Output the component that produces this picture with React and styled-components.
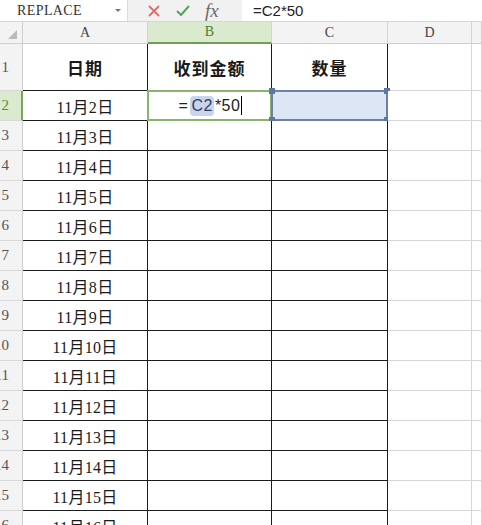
import React from "react";
import styled, { createGlobalStyle } from "styled-components";

const Global = createGlobalStyle`
  html, body { margin: 0; padding: 0; background: #fff; overflow: hidden; }
  #root { width: 482px; height: 525px; overflow: hidden; }
`;

const Page = styled.div`
  width: 482px;
  height: 525px;
  display: flex;
  flex-direction: column;
  overflow: hidden;
`;

const FormulaBar = styled.div`
  height: 22px;
  flex: none;
  display: flex;
  border-bottom: 1px solid #d6d6d6;
  box-sizing: border-box;
  background: #f1f1f1;
`;

const NameBox = styled.div`
  width: 128px;
  background: #fff;
  display: flex;
  align-items: center;
  justify-content: space-between;
  padding: 0 6px 0 17px;
  box-sizing: border-box;
  border-right: 1px solid #dcdcdc;
  font-family: "Liberation Serif", serif;
  font-size: 14px;
  letter-spacing: 0.4px;
  color: #333;
`;

const Caret = styled.span`
  width: 0;
  height: 0;
  border-left: 3px solid transparent;
  border-right: 3px solid transparent;
  border-top: 3px solid #777;
`;

const Tools = styled.div`
  width: 114px;
  display: flex;
  align-items: center;
  gap: 16px;
  padding-left: 20px;
  box-sizing: border-box;
`;

const Fx = styled.span`
  font-family: "Liberation Serif", serif;
  font-style: italic;
  font-size: 19px;
  color: #6a6a6a;
  margin-left: -1px;
  line-height: 1;
`;

const FormulaInput = styled.div`
  flex: 1;
  background: #fff;
  display: flex;
  align-items: center;
  padding-left: 11px;
  font-family: "Liberation Sans", Arial, sans-serif;
  font-size: 15px;
  color: #222;
`;

const Sheet = styled.div`
  display: grid;
  grid-template-columns: 23px 125px 124px 116px 84px 1fr;
  grid-template-rows: 22px 47px repeat(15, 30px);
`;

const Corner = styled.div`
  background: #f3f3f3;
  border-right: 1px solid #cfcfcf;
  border-bottom: 1px solid #cfcfcf;
  box-sizing: border-box;
  position: relative;
  &::after {
    content: "";
    position: absolute;
    right: 5px;
    bottom: 4px;
    width: 0;
    height: 0;
    border-left: 9px solid transparent;
    border-bottom: 9px solid #b9b9b9;
  }
`;

const ColHeader = styled.div`
  background: ${(p) => (p.$active ? "#d9eacf" : "#f3f3f3")};
  color: ${(p) => (p.$active ? "#4b7f2c" : "#444")};
  border-right: 1px solid #d3d3d3;
  border-bottom: ${(p) => (p.$active ? "2px solid #6f9f4f" : "1px solid #cfcfcf")};
  box-sizing: border-box;
  display: flex;
  align-items: center;
  justify-content: center;
  font-family: "Liberation Serif", serif;
  font-size: 14px;
`;

const RowHeader = styled.div`
  background: ${(p) => (p.$active ? "#d9eacf" : "#f3f3f3")};
  color: ${(p) => (p.$active ? "#5b8c3c" : "#555")};
  border-right: ${(p) => (p.$active ? "2px solid #79a65a" : "1px solid #cfcfcf")};
  border-bottom: 1px solid #d8d8d8;
  box-sizing: border-box;
  display: flex;
  align-items: center;
  justify-content: flex-end;
  padding-right: ${(p) => (p.$active ? "12px" : "13px")};
  overflow: hidden;
  white-space: nowrap;
  font-family: "Liberation Serif", serif;
  font-size: 15px;
`;

const Cell = styled.div`
  position: relative;
  box-sizing: border-box;
  border-right: 1px solid ${(p) => (p.$table ? "#1c1c1c" : "#d6d6d6")};
  border-bottom: 1px solid ${(p) => (p.$table ? "#1c1c1c" : "#d6d6d6")};
  background: ${(p) => (p.$selected ? "#dce6f5" : "#fff")};
  display: flex;
  align-items: center;
  justify-content: center;
  white-space: nowrap;
  font-family: "Liberation Serif", "Noto Sans CJK SC", serif;
  font-size: ${(p) => (p.$bold ? "17px" : "16px")};
  font-weight: ${(p) => (p.$bold ? 700 : 400)};
  letter-spacing: ${(p) => (p.$bold ? "1px" : "0.3px")};
  color: #1a1a1a;
`;

const EditFrame = styled.div`
  position: absolute;
  left: -1px;
  top: -1px;
  right: -1px;
  bottom: -1px;
  border: 2px solid #88b46c;
  pointer-events: none;
`;

const SelectFrame = styled.div`
  position: absolute;
  left: -1px;
  top: -1px;
  right: -1px;
  bottom: -1px;
  border: 2px solid #6c80aa;
  pointer-events: none;
`;

const Handle = styled.span`
  position: absolute;
  width: 6px;
  height: 6px;
  background: #5d76a6;
  ${(p) => (p.$x === "l" ? "left: -4px;" : "right: -4px;")}
  ${(p) => (p.$y === "t" ? "top: -4px;" : "bottom: -4px;")}
`;

const EditText = styled.span`
  display: flex;
  align-items: center;
  font-family: "Liberation Sans", Arial, sans-serif;
  font-size: 16px;
  letter-spacing: 0.5px;
  color: #222;
  margin-left: 2px;
`;

const RefToken = styled.span`
  background: #c9d5ec;
  border-radius: 4px;
  padding: 1px 1px;
  margin: 0 1px 0 2px;
  color: #2f3f66;
`;

const Cursor = styled.span`
  display: inline-block;
  width: 1px;
  height: 19px;
  background: #000;
  margin-left: 1px;
`;

const dates = Array.from({ length: 15 }, (_, i) => `11月${i + 2}日`);

function IconX() {
  return (
    <svg width="12" height="12" viewBox="0 0 12 12">
      <path d="M1.5 1.5 L10.5 10.5 M10.5 1.5 L1.5 10.5" stroke="#e26a6a" strokeWidth="1.8" strokeLinecap="round" />
    </svg>
  );
}

function IconCheck() {
  return (
    <svg width="14" height="12" viewBox="0 0 14 12">
      <path d="M1.5 6.5 L5 10 L12.5 1.5" stroke="#4fa64f" strokeWidth="1.9" fill="none" strokeLinecap="round" strokeLinejoin="round" />
    </svg>
  );
}

export default function App() {
  return (
    <Page>
      <Global />
      <FormulaBar>
        <NameBox>
          REPLACE
          <Caret />
        </NameBox>
        <Tools>
          <IconX />
          <IconCheck />
          <Fx>fx</Fx>
        </Tools>
        <FormulaInput>=C2*50</FormulaInput>
      </FormulaBar>
      <Sheet>
        <Corner />
        <ColHeader>A</ColHeader>
        <ColHeader $active>B</ColHeader>
        <ColHeader>C</ColHeader>
        <ColHeader>D</ColHeader>
        <ColHeader />

        <RowHeader>1</RowHeader>
        <Cell $table $bold>日期</Cell>
        <Cell $table $bold>收到金额</Cell>
        <Cell $table $bold>数量</Cell>
        <Cell />
        <Cell />

        {dates.map((d, i) => {
          const row = i + 2;
          const active = row === 2;
          return (
            <React.Fragment key={d}>
              <RowHeader $active={active}>{row}</RowHeader>
              <Cell $table>{d}</Cell>
              <Cell $table>
                {active && (
                  <>
                    <EditText>
                      =<RefToken>C2</RefToken>*50
                      <Cursor />
                    </EditText>
                    <EditFrame />
                  </>
                )}
              </Cell>
              <Cell $table $selected={active}>
                {active && (
                  <SelectFrame>
                    <Handle $x="l" $y="t" />
                    <Handle $x="r" $y="t" />
                    <Handle $x="l" $y="b" />
                    <Handle $x="r" $y="b" />
                  </SelectFrame>
                )}
              </Cell>
              <Cell />
              <Cell />
            </React.Fragment>
          );
        })}
      </Sheet>
    </Page>
  );
}
